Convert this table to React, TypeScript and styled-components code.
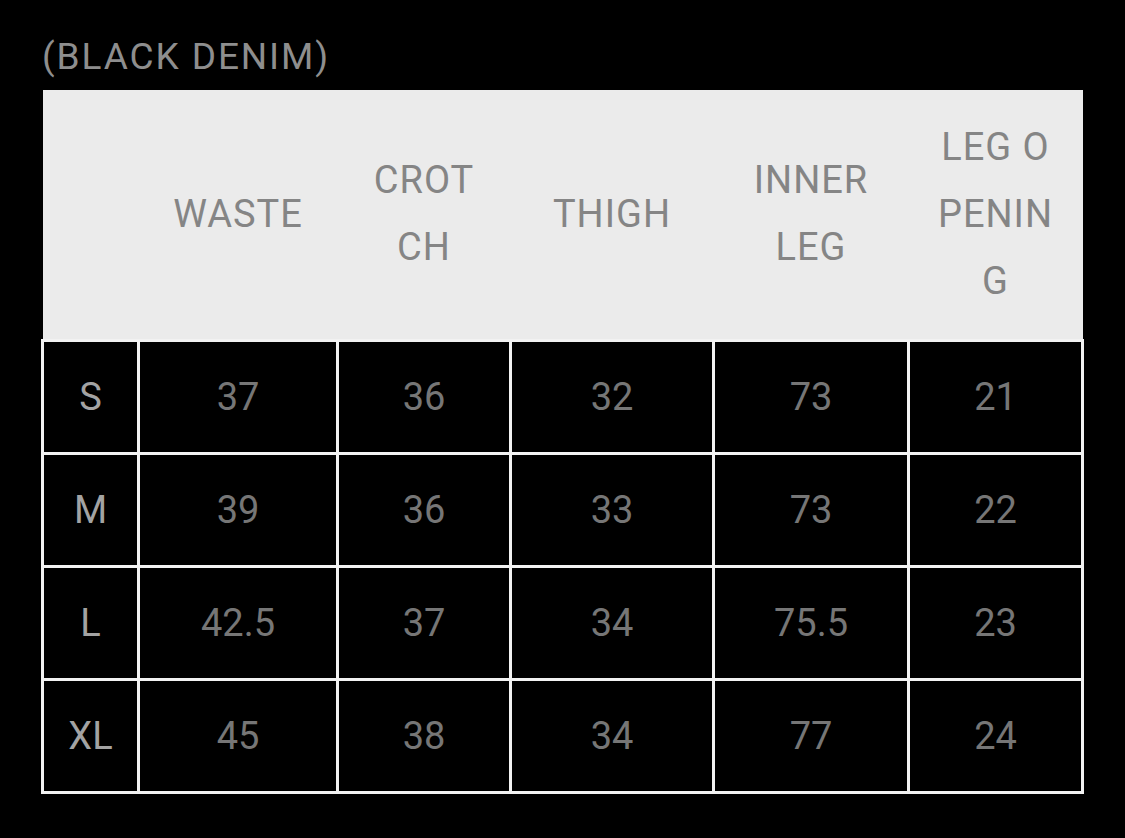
import React from 'react'
import styled, { createGlobalStyle } from 'styled-components'

const GlobalStyle = createGlobalStyle`
  html, body {
    margin: 0;
    padding: 0;
    background: #000;
  }
`

const Wrapper = styled.section`
  font-family: Roboto, 'Liberation Sans', sans-serif;
  width: 1125px;
  min-height: 838px;
  background: #000;
  padding: 0 42px 0 41px;
  box-sizing: border-box;
`

const Title = styled.h2`
  margin: 0;
  height: 90px;
  display: flex;
  align-items: center;
  padding: 22px 0 0 1px;
  box-sizing: border-box;
  font-size: 37px;
  font-weight: 400;
  letter-spacing: 1.9px;
  color: #8e8e8e;
`

const Table = styled.table`
  width: 1040px;
  border-collapse: collapse;
  table-layout: fixed;
`

const HeadCell = styled.th`
  background: #ebebeb;
  height: 250px;
  padding: 0 28px;
  font-size: 38px;
  font-weight: 400;
  letter-spacing: 1px;
  line-height: 67px;
  color: #858585;
  text-align: center;
  word-break: break-all;
  box-sizing: border-box;
`

const Cell = styled.td<{ $label?: boolean }>`
  height: 113px;
  padding: 0;
  border: 3px solid #f2f2f2;
  text-align: center;
  font-size: 38px;
  color: ${p => (p.$label ? '#a3a3a3' : '#767676')};
  box-sizing: border-box;
`

const columns = [
  { name: '', width: 96 },
  { name: 'WASTE', width: 199 },
  { name: 'CROTCH', width: 173 },
  { name: 'THIGH', width: 203 },
  { name: 'INNER LEG', width: 195 },
  { name: 'LEG OPENING', width: 174 },
]

const rows = [
  ['S', '37', '36', '32', '73', '21'],
  ['M', '39', '36', '33', '73', '22'],
  ['L', '42.5', '37', '34', '75.5', '23'],
  ['XL', '45', '38', '34', '77', '24'],
]

const App = () => {
  return (
    <Wrapper>
      <GlobalStyle />
      <Title>(BLACK DENIM)</Title>
      <Table>
        <colgroup>
          {columns.map((c, i) => (
            <col key={i} style={{ width: c.width }} />
          ))}
        </colgroup>
        <thead>
          <tr>
            {columns.map((c, i) => (
              <HeadCell key={i}>{c.name}</HeadCell>
            ))}
          </tr>
        </thead>
        <tbody>
          {rows.map(r => (
            <tr key={r[0]}>
              {r.map((v, i) => (
                <Cell key={i} $label={i === 0}>
                  {v}
                </Cell>
              ))}
            </tr>
          ))}
        </tbody>
      </Table>
    </Wrapper>
  )
}

export default App
